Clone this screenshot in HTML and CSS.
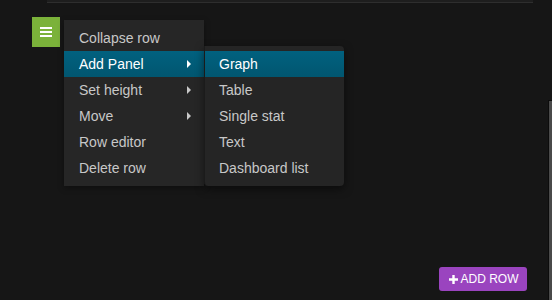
FILE: index.html
```html
<!DOCTYPE html>
<html>
<head>
<meta charset="utf-8">
<link rel="stylesheet" href="styles.css">
</head>
<body>
<div class="page">
  <div class="topbar"></div>
  <div class="row-area">
    <div class="row-menu-wrap">
      <div class="row-toggle">
        <span class="bar"></span><span class="bar"></span><span class="bar"></span>
      </div>
      <ul class="menu">
        <li class="item"><span class="link">Collapse row</span></li>
        <li class="item sub active"><span class="link">Add Panel</span><span class="caret"></span>
          <ul class="menu submenu">
            <li class="item active"><span class="link">Graph</span></li>
            <li class="item"><span class="link">Table</span></li>
            <li class="item"><span class="link">Single stat</span></li>
            <li class="item"><span class="link">Text</span></li>
            <li class="item"><span class="link">Dashboard list</span></li>
          </ul>
        </li>
        <li class="item sub"><span class="link">Set height</span><span class="caret"></span></li>
        <li class="item sub"><span class="link">Move</span><span class="caret"></span></li>
        <li class="item"><span class="link">Row editor</span></li>
        <li class="item"><span class="link">Delete row</span></li>
      </ul>
    </div>
  </div>
  <div class="footer">
    <button class="add-row"><svg class="plus" width="9" height="9" viewBox="0 0 9 9"><path d="M3.3 0h2.4v3.3H9v2.4H5.7V9H3.3V5.7H0V3.3h3.3z" fill="#fff"/></svg>ADD ROW</button>
  </div>
  <div class="scroll-edge"></div>
</div>
</body>
</html>
```

FILE: styles.css
```css
* { box-sizing: border-box; }
html, body { margin: 0; padding: 0; }
body {
  background: #161616;
  font-family: "Liberation Sans", Arial, sans-serif;
  width: 552px;
  height: 300px;
  overflow: hidden;
}
.page {
  position: relative;
  height: 300px;
  display: flex;
  flex-direction: column;
}
.topbar {
  margin: 0 19px 0 47px;
  height: 3px;
  background: #1e1e1e;
  border-bottom: 1px solid #2e2e2e;
}
.row-area {
  padding: 14px 0 0 32px;
}
.row-menu-wrap {
  position: relative;
  width: 28px;
}
.row-toggle {
  width: 28px;
  height: 30px;
  background: #7bb23a;
  display: flex;
  flex-direction: column;
  align-items: center;
  justify-content: center;
  gap: 2px;
}
.row-toggle .bar {
  display: block;
  width: 12px;
  height: 2px;
  background: #fff;
}
.menu {
  list-style: none;
  margin: 0;
  padding: 5px 0;
  position: absolute;
  left: 32px;
  top: 3px;
  width: 140px;
  background: #262626;
  box-shadow: 0 2px 6px rgba(0,0,0,0.35);
}
.item {
  position: relative;
  height: 26px;
  line-height: 26px;
  font-size: 14px;
  color: #c8c8c8;
  padding-left: 15px;
  white-space: nowrap;
}
.item.active > .link { color: #fff; }
.item.active {
  background: linear-gradient(to bottom, #01617f, #015670);
}
.caret {
  position: absolute;
  right: 13px;
  top: 9px;
  width: 0;
  height: 0;
  border-left: 4px solid #c8c8c8;
  border-top: 4px solid transparent;
  border-bottom: 4px solid transparent;
}
.item.active > .caret { border-left-color: #fff; }
.submenu {
  left: 140px;
  top: -5px;
  width: 140px;
  background: #252525;
  border-radius: 0 4px 4px 4px;
  border-left: 1px solid #1b1b1b;
  box-shadow: 0 3px 8px rgba(0,0,0,0.5);
}
.submenu .item {
  padding-left: 14px;
}
.footer {
  margin-top: auto;
  display: flex;
  justify-content: flex-end;
  padding: 0 25px 9px 0;
}
.add-row {
  width: 88px;
  height: 24px;
  border: none;
  border-radius: 3px;
  background: #9a44bf;
  color: #fff;
  font-family: "Liberation Sans", Arial, sans-serif;
  font-size: 12px;
  padding: 0 0 0 1px;
  display: flex;
  align-items: center;
  justify-content: center;
  gap: 3px;
}
.plus { display: block; }
.scroll-edge {
  position: absolute;
  right: 0;
  top: 100px;
  bottom: 0;
  width: 4px;
  background: #4a4a4a;
  border-left: 1px solid #0c0c0c;
  border-top: 1px solid #0c0c0c;
}
```
